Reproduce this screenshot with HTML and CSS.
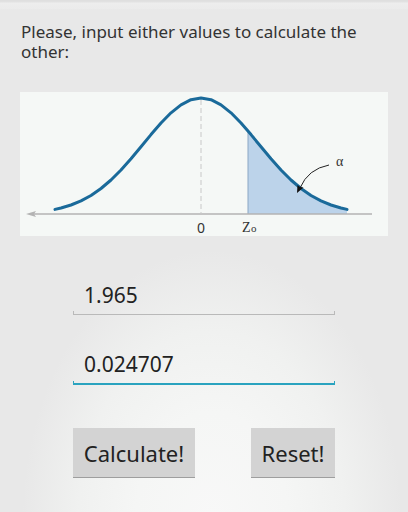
FILE: index.html
```html
<!DOCTYPE html>
<html>
<head>
<meta charset="utf-8">
<link rel="stylesheet" href="styles.css">
</head>
<body>
<div class="topbar"></div>
<div class="prompt">Please, input either values to calculate the other:</div>
<div class="chart">
<svg width="368" height="144" viewBox="0 0 368 144" xmlns="http://www.w3.org/2000/svg">
  <path class="area" d="M228,122 L228,39 L231,42.6 L241,54.8 L251,66.8 L261,78 L271,88 L281,96.5 L291,103.5 L301,108.9 L311,113 L321,116 L327,117.4 L327,122 Z"/>
  <line class="zline" x1="228" y1="39" x2="228" y2="122"/>
  <line class="axis" x1="10" y1="122" x2="352" y2="122"/>
  <path class="arrowhead" d="M6,122 L16,119 L14,122 L16,125 Z"/>
  <line class="dash" x1="181" y1="8" x2="181" y2="122"/>
  <path class="curve" d="M35,117.4 L41,116 L51,113 L61,108.9 L71,103.5 L81,96.5 L91,88 L101,78 L111,66.8 L121,54.8 L131,42.6 L141,31 L151,20.8 L161,12.8 L171,7.7 L181,6 L191,7.7 L201,12.8 L211,20.8 L221,31 L231,42.6 L241,54.8 L251,66.8 L261,78 L271,88 L281,96.5 L291,103.5 L301,108.9 L311,113 L321,116 L327,117.4"/>
  <path class="pointer" d="M309,73 Q288,77 280,96"/>
  <path class="pointhead" d="M277,101 L277.5,93 L280,95 L283.5,95.5 Z"/>
  <text class="lbl" x="181" y="141" text-anchor="middle">0</text>
  <text class="lbl serif" x="222" y="140">Z</text>
  <text class="lbl serif small" x="231" y="140">o</text>
  <text class="lbl serif" x="316" y="74">α</text>
</svg>
</div>
<div class="form">
  <div class="field">
    <div class="value">1.965</div>
    <div class="line"></div>
  </div>
  <div class="field active">
    <div class="value">0.024707</div>
    <div class="line"></div>
  </div>
  <div class="buttons">
    <div class="btn calc">Calculate!</div>
    <div class="btn reset">Reset!</div>
  </div>
</div>
</body>
</html>
```
FILE: styles.css
```css
html, body {
  margin: 0;
  padding: 0;
}
body {
  width: 408px;
  height: 512px;
  overflow: hidden;
  font-family: "Noto Sans", "Open Sans", sans-serif;
  color: #222;
  background:
    radial-gradient(ellipse 190px 270px at 212px 520px, #f8f8f8 0%, #f5f6f5 40%, #f0f1f0 70%, rgba(232,232,232,0) 100%),
    #e8e8e8;
}
.topbar {
  height: 10px;
  background: linear-gradient(#dedede 0px, #e2e2e2 2px, #ededed 3px, #ebebeb 9px, #e6e6e6 10px);
}
.prompt {
  margin: 12px 0 0 21px;
  width: 350px;
  font-size: 17px;
  line-height: 20px;
  color: #333;
}
.chart {
  margin: 30px 0 0 20px;
  width: 368px;
  height: 144px;
  background: #f5f8f6;
}
.chart svg {
  display: block;
}
.area { fill: #bcd3ea; }
.zline { stroke: #8aa7c4; stroke-width: 1; }
.axis { stroke: #b3b3b3; stroke-width: 1.5; }
.arrowhead { fill: #b3b3b3; }
.dash { stroke: #c8c8c8; stroke-width: 1; stroke-dasharray: 5 3; }
.curve { fill: none; stroke: #1a6a9a; stroke-width: 3; stroke-linejoin: round; stroke-linecap: round; }
.pointer { fill: none; stroke: #222; stroke-width: 1; }
.pointhead { fill: #111; }
.lbl { font-family: "Noto Sans", sans-serif; font-size: 14px; fill: #333; }
.serif { font-family: "Liberation Serif", serif; font-size: 14px; }
.small { font-size: 11px; }
.form {
  margin: 44px 0 0 73px;
  width: 262px;
}
.field + .field {
  margin-top: 34px;
}
.value {
  padding-left: 11px;
  font-size: 21px;
  line-height: 30px;
  padding-bottom: 1px;
  color: #222;
}
.line {
  height: 3px;
  border: 1px solid #b9b9b9;
  border-top: none;
}
.active .line {
  height: 2px;
  border-color: #2aa3bf;
  border-width: 0 1px 2px 1px;
}
.active .value {
  padding-bottom: 2px;
}
.buttons {
  display: flex;
  justify-content: space-between;
  margin-top: 43px;
}
.btn {
  height: 49px;
  display: flex;
  align-items: center;
  justify-content: center;
  background: #d3d3d3;
  border-bottom: 1px solid #9e9e9e;
  font-size: 22px;
  color: #222;
}
.calc { width: 122px; }
.reset { width: 84px; }
```
